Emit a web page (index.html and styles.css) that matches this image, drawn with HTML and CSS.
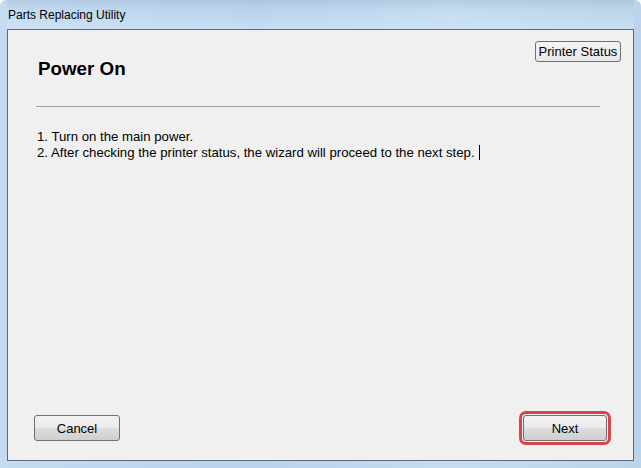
FILE: index.html
```html
<!DOCTYPE html>
<html lang="en">
<head>
    <meta charset="UTF-8">
    <title>Parts Replacing Utility</title>
    <link rel="stylesheet" href="styles.css">
</head>
<body>
    <div id="window">
        <div id="title-bar">Parts Replacing Utility</div>
        <div id="client">
            <div class="head">
                <h1 class="title">Power On</h1>
                <button class="btn btn-status">Printer Status</button>
            </div>
            <hr class="rule">
            <div class="steps">
                <p>1. Turn on the main power.</p>
                <p>2. After checking the printer status, the wizard will proceed to the next step.<span class="caret"></span></p>
            </div>
            <div class="foot">
                <button class="btn btn-cancel">Cancel</button>
                <button class="btn btn-next">Next</button>
            </div>
        </div>
    </div>
</body>
</html>
```
FILE: styles.css
```css
*{
    margin: 0;
    padding: 0;
    box-sizing: border-box;
}
body{
    width: 641px;
    height: 468px;
    overflow: hidden;
    font-family: "Liberation Sans", Arial, sans-serif;
}
#window{
    width: 641px;
    height: 468px;
    display: flex;
    flex-direction: column;
    padding: 0 7px 7px 7px;
    background: linear-gradient(90deg, #c4dbf1 0%, #b9d3ec 40%, #c5dcf1 70%, #bcd4ea 100%);
    border-radius: 6px 6px 0 0;
}
#title-bar{
    height: 29px;
    padding: 8px 1px 0;
    font-size: 12px;
    color: #000;
    background: linear-gradient(180deg, rgba(150,175,200,0.35) 0%, rgba(255,255,255,0) 35%, rgba(220,235,250,0.4) 100%);
}
#client{
    flex: 1;
    display: flex;
    flex-direction: column;
    background: #f0f0f0;
    border: 1px solid #5d6b78;
    padding: 11px 22px 19px 26px;
}
.head{
    display: flex;
    justify-content: space-between;
    align-items: flex-start;
}
.title{
    font-size: 18.8px;
    font-weight: bold;
    margin: 17px 0 0 4px;
    color: #000;
}
.btn{
    font-family: "Liberation Sans", Arial, sans-serif;
    font-size: 13px;
    color: #000;
    border: 1px solid #707070;
    border-radius: 3px;
    background: linear-gradient(180deg, #f2f2f2 0%, #ebebeb 48%, #dddddd 52%, #cfcfcf 100%);
    cursor: pointer;
}
.btn-status{
    width: 86px;
    height: 21px;
    margin-right: -10px;
    background: linear-gradient(180deg, #f4f4f4 0%, #e8e8e8 100%);
}
.rule{
    border: none;
    border-top: 1px solid #a0a0a0;
    margin: 26px 11px 0 2px;
}
.steps{
    margin: 22px 0 0 3px;
    font-size: 13.2px;
    line-height: 16px;
    color: #000;
    flex: 1;
}
.caret{
    display: inline-block;
    width: 1px;
    height: 15px;
    background: #000;
    margin-left: 4px;
    vertical-align: -3px;
}
.foot{
    display: flex;
    justify-content: space-between;
    align-items: center;
}
.btn-cancel{
    width: 86px;
    height: 26px;
}
.btn-next{
    width: 84px;
    height: 26px;
    margin-right: 4px;
    outline: 3px solid #d9434a;
    outline-offset: 1px;
}
```
